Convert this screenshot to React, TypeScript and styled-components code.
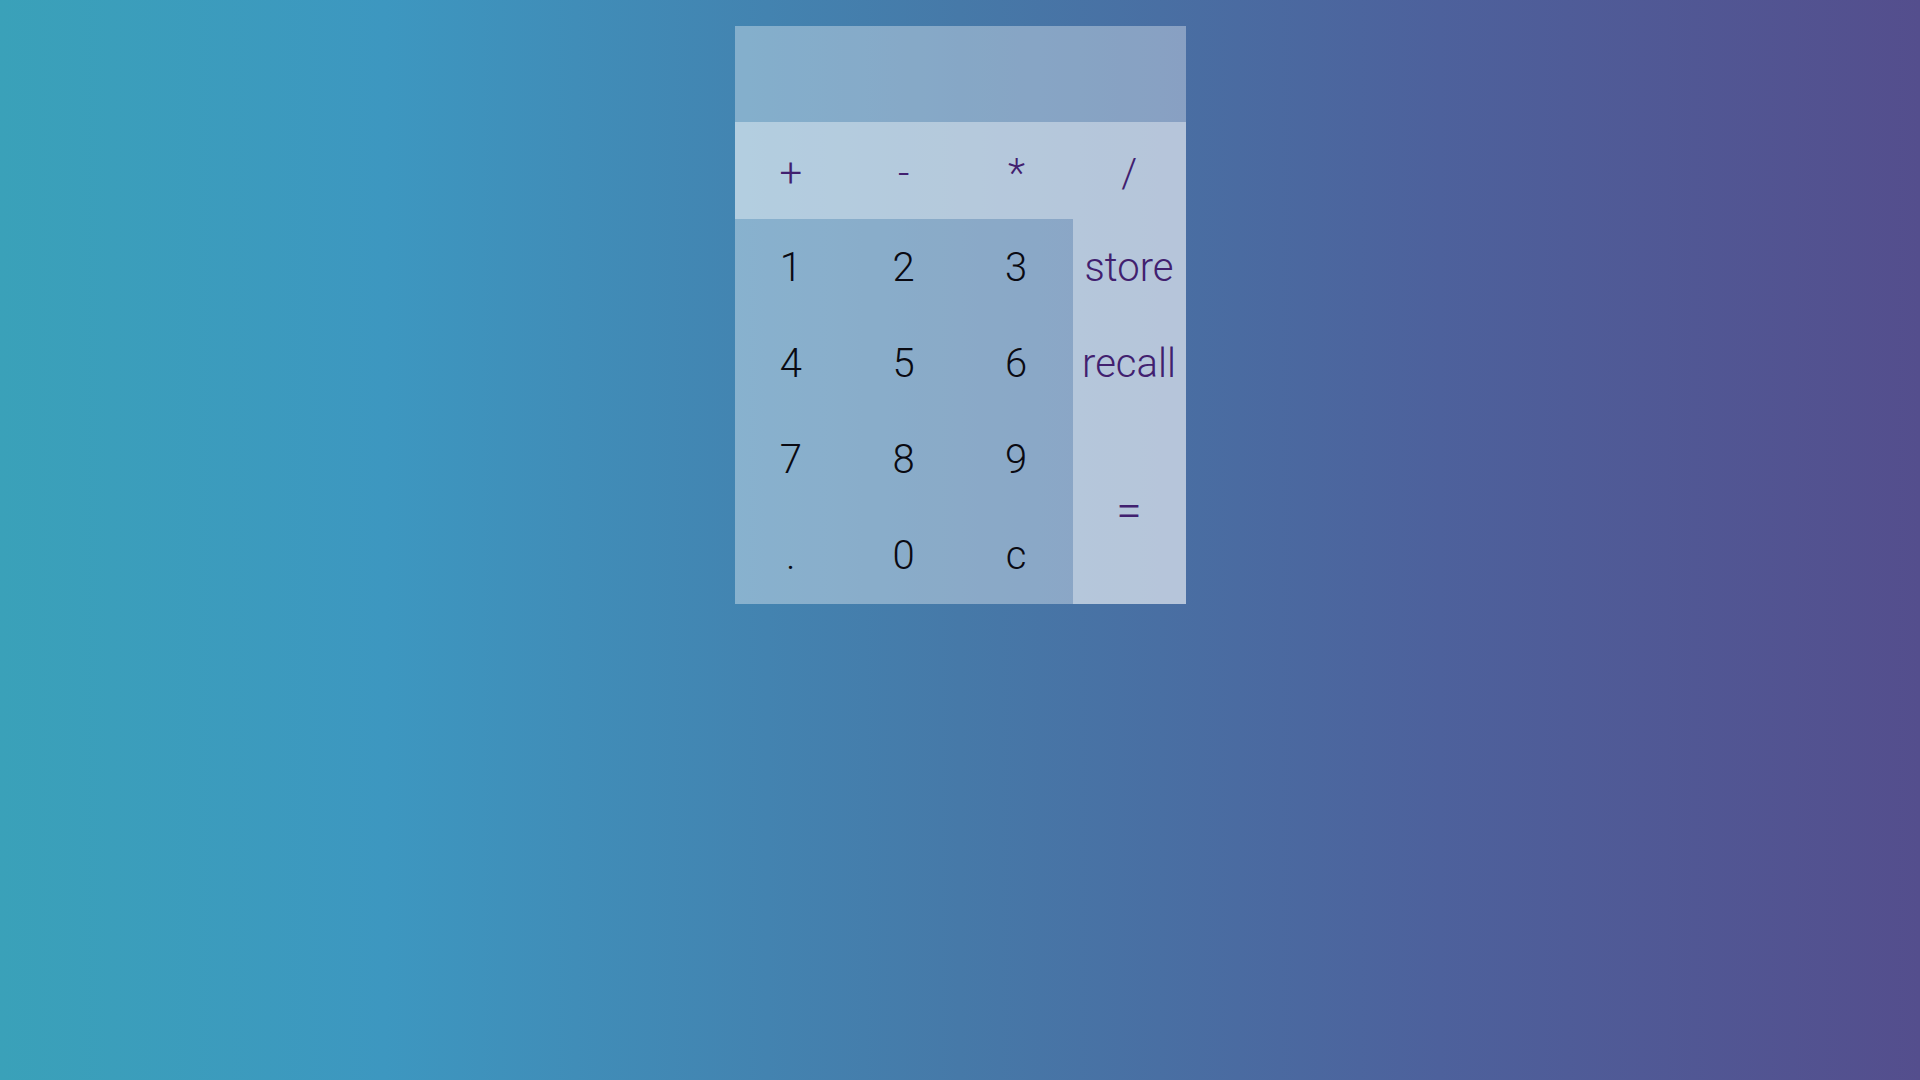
import React from 'react';
import styled, { createGlobalStyle } from 'styled-components';

const GlobalStyle = createGlobalStyle`
	html, body, #root {
		height: 100%;
		margin: 0;
	}
	body {
		background: linear-gradient(90deg, #3aa1b9 0%, #3d97c0 20%, #4679a8 50%, #4d619c 75%, #544e8d 100%);
		font-family: Roboto, "Liberation Sans", Arial, sans-serif;
	}
`;

const digits = ['1', '2', '3', '4', '5', '6', '7', '8', '9', '.', '0', 'c'];
const operators = ['+', '-', '*', '/'];

const App = () => {
	return (
		<Page>
			<GlobalStyle />
			<Calculator>
				<Display />
				<Operators>
					{operators.map((op) => (
						<OpKey key={op} $accent>
							{op}
						</OpKey>
					))}
				</Operators>
				<Body>
					<Pad>
						{digits.map((d) => (
							<Key key={d}>{d}</Key>
						))}
					</Pad>
					<Side>
						<Key $accent>store</Key>
						<Key $accent>recall</Key>
						<EqualsKey $accent>=</EqualsKey>
					</Side>
				</Body>
			</Calculator>
		</Page>
	);
};

const Page = styled.div`
	display: flex;
	justify-content: center;
	padding-top: 26px;
	min-height: 100%;
	box-sizing: border-box;
`;

const Calculator = styled.div`
	display: flex;
	flex-direction: column;
	width: 451px;
`;

const Display = styled.div`
	height: 96px;
	background: rgba(255, 255, 255, 0.35);
`;

const Operators = styled.div`
	display: grid;
	grid-template-columns: repeat(4, 1fr);
	height: 97px;
	background: rgba(255, 255, 255, 0.6);
`;

const Body = styled.div`
	display: grid;
	grid-template-columns: 338px 113px;
	height: 385px;
`;

const Pad = styled.div`
	display: grid;
	grid-template-columns: repeat(3, 1fr);
	grid-template-rows: repeat(4, 1fr);
	background: rgba(255, 255, 255, 0.37);
`;

const Side = styled.div`
	display: grid;
	grid-template-rows: repeat(4, 1fr);
	background: rgba(255, 255, 255, 0.6);
`;

const Key = styled.div<{ $accent?: boolean }>`
	display: flex;
	align-items: center;
	justify-content: center;
	font-size: 40px;
	font-weight: 300;
	color: ${(p) => (p.$accent ? '#41206f' : '#0a0a12')};
	white-space: nowrap;
	cursor: pointer;
	user-select: none;
`;

const OpKey = styled(Key)`
	padding-top: 6px;
`;

const EqualsKey = styled(Key)`
	grid-row: span 2;
	font-size: 46px;
	padding-top: 4px;
`;

export default App;
